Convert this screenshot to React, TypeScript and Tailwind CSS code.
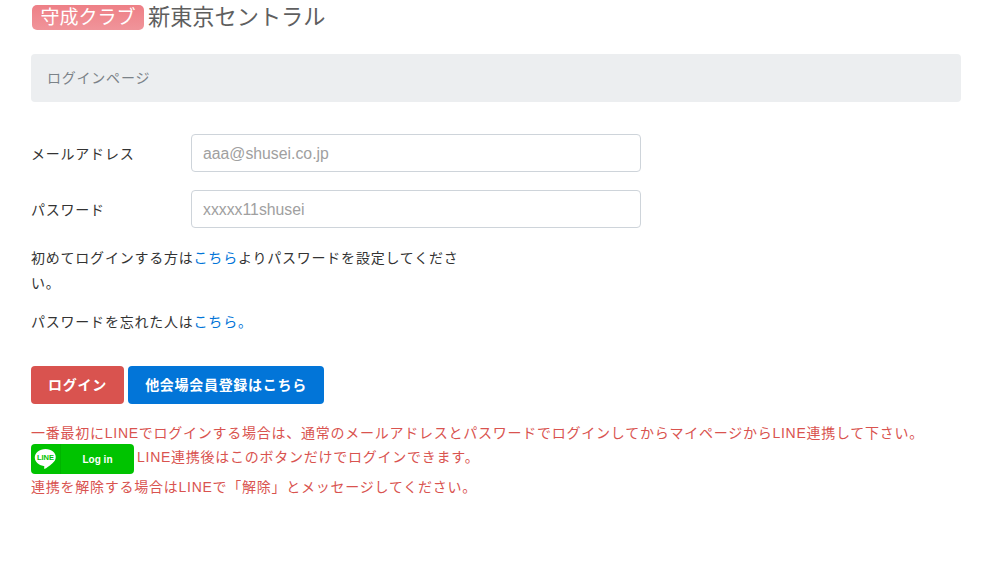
export default function App() {
  const font = { fontFamily: '"Liberation Sans", "Noto Sans CJK JP", sans-serif' };
  return (
    <div style={font} className="w-[1002px] h-[585px] bg-white overflow-hidden px-[31px] text-[14px] text-[#333] tracking-[0.78px]">
      <div className="flex items-center h-[34px] pl-[1px] tracking-normal">
        <span className="h-[25px] w-[112px] rounded-[5px] bg-gradient-to-b from-[#ee7f86] to-[#f0949a] text-white text-[19px] leading-[25px] text-center">守成クラブ</span>
        <span className="ml-[4px] pt-[1px] text-[22.2px] leading-[34px] text-[#5f5f5f]">新東京セントラル</span>
      </div>
      <div className="mt-[20px] w-[930px] h-[48px] rounded-[4px] bg-[#eceef0] px-[16px] flex items-center text-[#7b8288]">ログインページ</div>

      <div className="mt-[32px] flex items-center h-[38px]">
        <label className="w-[160px] pt-[2px]">メールアドレス</label>
        <input readOnly placeholder="aaa@shusei.co.jp" className="w-[450px] h-[38px] rounded-[4px] border border-[#ced4da] pl-[11px] pr-[12px] pt-[2px] text-[15.8px] tracking-normal placeholder:text-[#a0a0a0] outline-none" />
      </div>
      <div className="mt-[18px] flex items-center h-[38px]">
        <label className="w-[160px] pt-[2px]">パスワード</label>
        <input readOnly placeholder="xxxxx11shusei" className="w-[450px] h-[38px] rounded-[4px] border border-[#ced4da] pl-[11px] pr-[12px] pt-[2px] text-[15.8px] tracking-normal placeholder:text-[#a0a0a0] outline-none" />
      </div>

      <p className="mt-[18px] w-[440px] leading-[25px]">初めてログインする方は<a className="text-[#0275d8]">こちら</a>よりパスワードを設定してください。</p>
      <p className="mt-[14px] leading-[25px]">パスワードを忘れた人は<a className="text-[#0275d8]">こちら。</a></p>

      <div className="mt-[31px] flex gap-[4px]">
        <button className="w-[93px] h-[38px] pt-[1px] rounded-[4px] bg-[#d9534f] text-white font-bold">ログイン</button>
        <button className="w-[196px] h-[38px] pt-[1px] rounded-[4px] bg-[#0275d8] text-white font-bold tracking-[0.7px]">他会場会員登録はこちら</button>
      </div>

      <div className="mt-[15px] text-[#d9534f] tracking-[0.75px]">
        <p className="leading-[28px] h-[25px]">一番最初にLINEでログインする場合は、通常のメールアドレスとパスワードでログインしてからマイページからLINE連携して下さい。</p>
        <div className="flex items-start h-[30px]">
          <span className="w-[103px] h-[30px] rounded-[4px] bg-[#00c300] flex items-center text-white tracking-normal">
            <span className="w-[30px] h-[30px] pl-[3px] flex items-center border-r border-[#00b300]">
              <svg width="23" height="22" viewBox="0 0 23 22">
                <path d="M11.500 1C5.500 1 .800 4.800 .800 9.500c0 4.200 3.700 7.700 8.800 8.400.7.100.8.500.7 1.100l-.2 1.200c-.1.500.2.800.9.500.8-.4 5-3 7.200-5.300 2.200-1.700 3.500-3.700 3.500-5.900C22.200 4.800 17.500 1 11.500 1z" fill="#fff" />
                <text x="11.500" y="12" textAnchor="middle" fontSize="7.500" fontWeight="700" fill="#00c300" fontFamily="Liberation Sans, sans-serif">LINE</text>
              </svg>
            </span>
            <span className="flex-1 text-center text-[10px] font-bold">Log in</span>
          </span>
          <span className="ml-[3px] leading-[26px]">LINE連携後はこのボタンだけでログインできます。</span>
        </div>
        <p className="leading-[26px]">連携を解除する場合はLINEで「解除」とメッセージしてください。</p>
      </div>
    </div>
  );
}
